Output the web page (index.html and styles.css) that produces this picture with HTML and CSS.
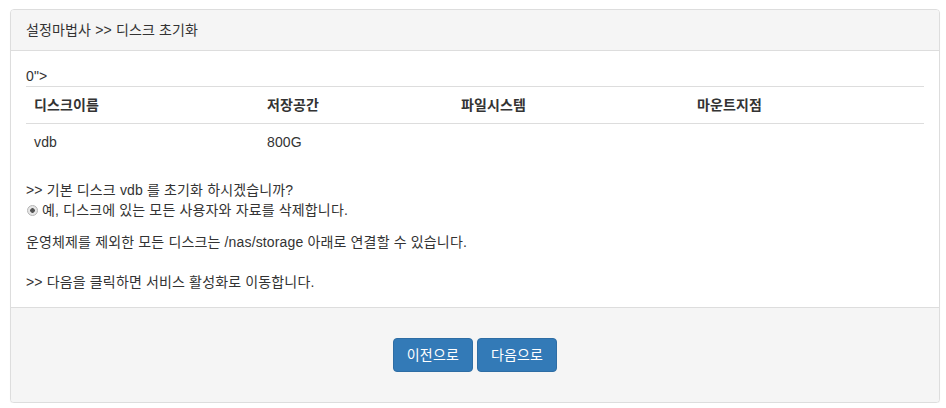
FILE: index.html
```html
<!DOCTYPE html>
<html lang="ko">
<head>
    <meta charset="UTF-8">
    <meta name="viewport" content="width=device-width, initial-scale=1.0">
    <title>설정마법사 - 디스크 초기화</title>
    <link rel="stylesheet" href="styles.css">
</head>
<body>
    <div class="wrap">
        <div class="panel">
            <div class="panel-heading">설정마법사 &gt;&gt; 디스크 초기화</div>

            <div class="panel-body">
                <div class="stray">0"&gt;</div>
                <table class="disk-table">
                    <colgroup>
                        <col class="col-name">
                        <col class="col-size">
                        <col class="col-fs">
                        <col class="col-mount">
                    </colgroup>
                    <tr>
                        <th>디스크이름</th>
                        <th>저장공간</th>
                        <th>파일시스템</th>
                        <th>마운트지점</th>
                    </tr>
                    <tr>
                        <td>vdb</td>
                        <td>800G</td>
                        <td></td>
                        <td></td>
                    </tr>
                </table>

                <div class="question">&gt;&gt; 기본 디스크 vdb 를 초기화 하시겠습니까?</div>
                <label class="radio-line">
                    <input type="radio" name="confirm" checked>
                    예, 디스크에 있는 모든 사용자와 자료를 삭제합니다.
                </label>
                <p class="note">운영체제를 제외한 모든 디스크는 /nas/storage 아래로 연결할 수 있습니다.</p>
                <p class="next-hint">&gt;&gt; 다음을 클릭하면 서비스 활성화로 이동합니다.</p>
            </div>

            <div class="panel-footer">
                <button type="button" class="btn">이전으로</button>
                <button type="button" class="btn">다음으로</button>
            </div>
        </div>
    </div>
</body>
</html>
```

FILE: styles.css
```css
body {
    margin: 0;
    font-family: "Liberation Sans", Arial, "Noto Sans CJK KR", sans-serif;
    font-size: 14px;
    line-height: 20px;
    letter-spacing: 0.15px;
    color: #333;
    background: #fff;
}
.wrap {
    padding: 9px 6px 0 10px;
}
.panel {
    border: 1px solid #ddd;
    border-radius: 4px;
    box-shadow: 0 1px 1px rgba(0, 0, 0, 0.05);
    background: #fff;
}
.panel-heading {
    padding: 10px 15px;
    background: #f5f5f5;
    border-bottom: 1px solid #ddd;
    border-radius: 3px 3px 0 0;
}
.panel-body {
    padding: 15px;
}
.disk-table {
    width: 100%;
    border-collapse: collapse;
    margin-bottom: 20px;
}
.col-name { width: 233px; }
.col-size { width: 194px; }
.col-fs { width: 236px; }
.col-mount { width: 235px; }
.disk-table th,
.disk-table td {
    padding: 8px;
    text-align: left;
    vertical-align: top;
    border-top: 1px solid #ddd;
}
.disk-table th {
    font-weight: bold;
}
.radio-line {
    display: flex;
    align-items: center;
    height: 20px;
}
.radio-line input {
    appearance: none;
    -webkit-appearance: none;
    box-sizing: border-box;
    margin: 0 4px 0 1px;
    width: 11px;
    height: 11px;
    border-radius: 50%;
    border: 1px solid #b5b5b5;
    background: radial-gradient(circle, #555 0, #555 2px, #e6e6e6 2.6px);
}
.note {
    margin: 12px 0 20px;
}
.next-hint {
    margin: 0;
}
.panel-footer {
    padding: 30px 15px;
    background: #f5f5f5;
    border-top: 1px solid #ddd;
    border-radius: 0 0 3px 3px;
    text-align: center;
}
.btn {
    font-family: inherit;
    font-size: 14px;
    line-height: 20px;
    letter-spacing: 0.15px;
    padding: 6px 13px;
    color: #fff;
    background: #337ab7;
    border: 1px solid #2e6da4;
    border-radius: 4px;
    cursor: pointer;
}
```
